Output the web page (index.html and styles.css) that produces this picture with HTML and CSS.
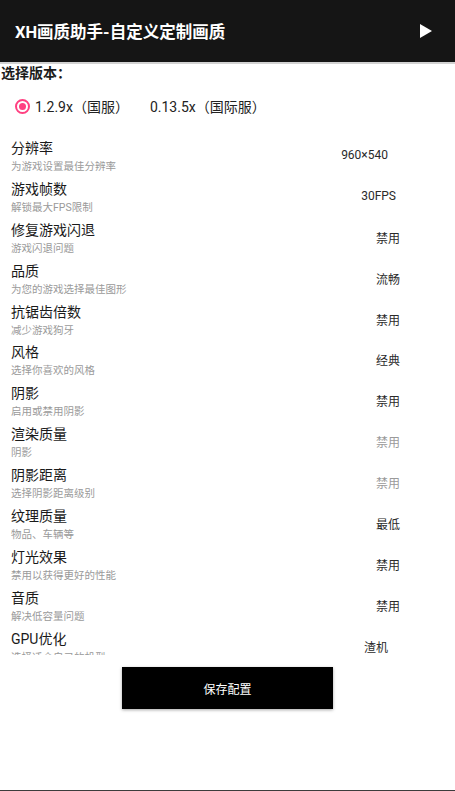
FILE: index.html
```html
<!DOCTYPE html>
<html lang="zh-CN">
    <head>
        <meta charset="UTF-8" />
        <meta name="viewport" content="width=device-width, initial-scale=1.0" />
        <title>XH画质助手</title>
        <link rel="stylesheet" href="styles.css">
    </head>

    <body>
        <div class="app">
            <div class="toolbar">
                <h1 class="toolbar-title">XH画质助手-自定义定制画质</h1>
                <svg class="play-icon" width="12" height="14" viewBox="0 0 12 14">
                    <polygon points="0,0 12,7 0,14" fill="#fff" />
                </svg>
            </div>

            <div class="version-label">选择版本：</div>
            <div class="version-group">
                <label class="version-option">
                    <span class="radio checked"></span>
                    1.2.9x（国服）
                </label>
                <label class="version-option plain">0.13.5x（国际服）</label>
            </div>

            <div class="settings">
                <div class="setting">
                    <div class="setting-text">
                        <div class="setting-title">分辨率</div>
                        <div class="setting-desc">为游戏设置最佳分辨率</div>
                    </div>
                    <div class="setting-value wide">960×540</div>
                </div>
                <div class="setting">
                    <div class="setting-text">
                        <div class="setting-title">游戏帧数</div>
                        <div class="setting-desc">解锁最大FPS限制</div>
                    </div>
                    <div class="setting-value fps">30FPS</div>
                </div>
                <div class="setting">
                    <div class="setting-text">
                        <div class="setting-title">修复游戏闪退</div>
                        <div class="setting-desc">游戏闪退问题</div>
                    </div>
                    <div class="setting-value">禁用</div>
                </div>
                <div class="setting">
                    <div class="setting-text">
                        <div class="setting-title">品质</div>
                        <div class="setting-desc">为您的游戏选择最佳图形</div>
                    </div>
                    <div class="setting-value">流畅</div>
                </div>
                <div class="setting">
                    <div class="setting-text">
                        <div class="setting-title">抗锯齿倍数</div>
                        <div class="setting-desc">减少游戏狗牙</div>
                    </div>
                    <div class="setting-value">禁用</div>
                </div>
                <div class="setting">
                    <div class="setting-text">
                        <div class="setting-title">风格</div>
                        <div class="setting-desc">选择你喜欢的风格</div>
                    </div>
                    <div class="setting-value">经典</div>
                </div>
                <div class="setting">
                    <div class="setting-text">
                        <div class="setting-title">阴影</div>
                        <div class="setting-desc">启用或禁用阴影</div>
                    </div>
                    <div class="setting-value">禁用</div>
                </div>
                <div class="setting">
                    <div class="setting-text">
                        <div class="setting-title">渲染质量</div>
                        <div class="setting-desc">阴影</div>
                    </div>
                    <div class="setting-value disabled">禁用</div>
                </div>
                <div class="setting">
                    <div class="setting-text">
                        <div class="setting-title">阴影距离</div>
                        <div class="setting-desc">选择阴影距离级别</div>
                    </div>
                    <div class="setting-value disabled">禁用</div>
                </div>
                <div class="setting">
                    <div class="setting-text">
                        <div class="setting-title">纹理质量</div>
                        <div class="setting-desc">物品、车辆等</div>
                    </div>
                    <div class="setting-value">最低</div>
                </div>
                <div class="setting">
                    <div class="setting-text">
                        <div class="setting-title">灯光效果</div>
                        <div class="setting-desc">禁用以获得更好的性能</div>
                    </div>
                    <div class="setting-value">禁用</div>
                </div>
                <div class="setting">
                    <div class="setting-text">
                        <div class="setting-title">音质</div>
                        <div class="setting-desc">解决低容量问题</div>
                    </div>
                    <div class="setting-value">禁用</div>
                </div>
                <div class="setting">
                    <div class="setting-text">
                        <div class="setting-title">GPU优化</div>
                        <div class="setting-desc">选择适合自己的机型</div>
                    </div>
                    <div class="setting-value wide">渣机</div>
                </div>
            </div>

            <button class="save-btn">保存配置</button>
        </div>
    </body>
</html>
```

FILE: styles.css
```css
body {
    margin: 0;
    padding: 0;
    background-color: #fff;
    font-family: Roboto, "Noto Sans CJK SC", sans-serif;
    color: #1c1c1c;
}

.app {
    height: 791px;
    box-sizing: border-box;
    display: flex;
    flex-direction: column;
    border-bottom: 1px solid #3c3c3c;
    overflow: hidden;
}

.toolbar {
    height: 62px;
    flex-shrink: 0;
    display: flex;
    align-items: center;
    justify-content: space-between;
    padding: 0 23px 0 15px;
    background-color: #151515;
    border-bottom: 2px solid #d2d2d2;
}

.toolbar-title {
    margin: 0;
    font-size: 16.5px;
    font-weight: bold;
    color: #fff;
}

.play-icon {
    display: block;
}

.version-label {
    padding-left: 1px;
    font-size: 14px;
    font-weight: bold;
    line-height: 18px;
    flex-shrink: 0;
}

.version-group {
    height: 48px;
    flex-shrink: 0;
    display: flex;
    align-items: center;
    padding-left: 15px;
    font-size: 14px;
    color: #222;
}

.version-option {
    display: flex;
    align-items: center;
    gap: 5px;
}

.version-option.plain {
    margin-left: 21px;
}

.radio {
    width: 15px;
    height: 15px;
    box-sizing: border-box;
    border: 2px solid #ff4081;
    border-radius: 50%;
    display: flex;
    align-items: center;
    justify-content: center;
}

.radio.checked::after {
    content: "";
    width: 7px;
    height: 7px;
    border-radius: 50%;
    background-color: #ff4081;
}

.settings {
    height: 525px;
    flex-shrink: 0;
    overflow: hidden;
    padding-top: 5px;
    box-sizing: border-box;
}

.setting {
    height: 40.9px;
    box-sizing: border-box;
    padding: 3px 0 0 11px;
    display: flex;
    align-items: center;
}

.setting-text {
    flex: 1;
    align-self: flex-start;
}

.setting-title {
    font-size: 14px;
    line-height: 20px;
    color: #1a1a1a;
}

.setting-desc {
    margin-top: 2px;
    font-size: 10.5px;
    line-height: 14px;
    color: #9a9a9a;
}

.setting-value {
    margin-right: 55px;
    font-size: 12px;
    color: #2a2a2a;
    margin-top: -3px;
}

.setting-value.wide {
    margin-right: 67px;
}

.setting-value.fps {
    margin-right: 59px;
}

.setting-value.disabled {
    color: #9a9a9a;
}

.save-btn {
    align-self: center;
    width: 211px;
    height: 42px;
    margin-top: 12px;
    border: none;
    background-color: #000;
    color: #fff;
    font-family: Roboto, "Noto Sans CJK SC", sans-serif;
    font-size: 12px;
    box-shadow: 0 1px 3px rgba(0, 0, 0, 0.35);
}
```
